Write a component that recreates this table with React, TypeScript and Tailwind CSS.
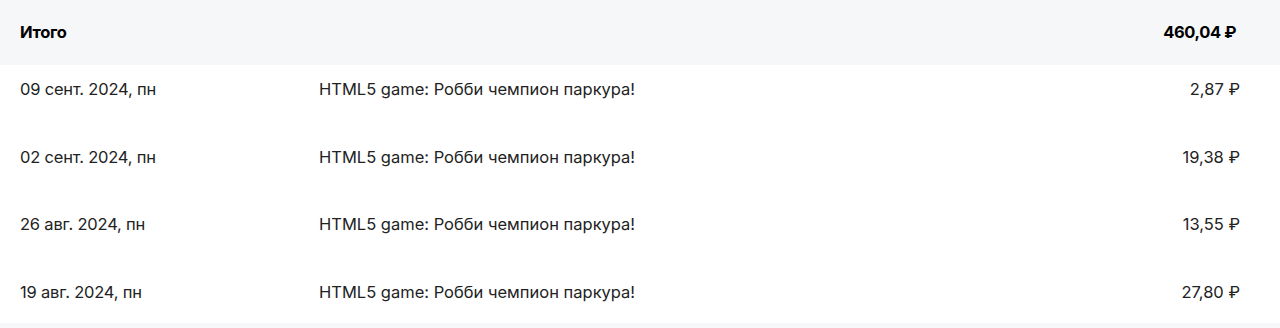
import { FC } from "react";

type Payout = {
  date: string;
  title: string;
  amount: string;
};

const payouts: Payout[] = [
  { date: "09 сент. 2024, пн", title: "HTML5 game: Робби чемпион паркура!", amount: "2,87 ₽" },
  { date: "02 сент. 2024, пн", title: "HTML5 game: Робби чемпион паркура!", amount: "19,38 ₽" },
  { date: "26 авг. 2024, пн", title: "HTML5 game: Робби чемпион паркура!", amount: "13,55 ₽" },
  { date: "19 авг. 2024, пн", title: "HTML5 game: Робби чемпион паркура!", amount: "27,80 ₽" },
];

const PayoutRow: FC<{ payout: Payout }> = ({ payout }) => {
  return (
    <div className="flex items-start h-[67.5px] shrink-0 pt-[14px] pl-5 pr-10 text-[16.5px] leading-5 text-[#222]">
      <div className="w-[299px] shrink-0 tracking-[-0.2px]">{payout.date}</div>
      <div className="flex-1">{payout.title}</div>
      <div className="w-[200px] text-right">{payout.amount}</div>
    </div>
  );
};

export default function App() {
  return (
    <div
      className="w-[1280px] h-[328px] overflow-hidden bg-white flex flex-col"
      style={{ fontFamily: "Inter, 'Noto Sans', sans-serif" }}
    >
      <div className="flex items-center h-[65px] shrink-0 pl-5 pr-11 bg-[#f6f7f9] text-[16.5px] font-bold text-black">
        <div className="flex-1 tracking-[-0.3px]">Итого</div>
        <div className="tracking-[-0.4px]">460,04 ₽</div>
      </div>
      <div className="flex flex-col h-[258px] shrink-0 overflow-hidden">
        {payouts.map((p) => (
          <PayoutRow key={p.date} payout={p} />
        ))}
      </div>
      <div className="flex-1 bg-[#f6f7f9]" />
    </div>
  );
}
